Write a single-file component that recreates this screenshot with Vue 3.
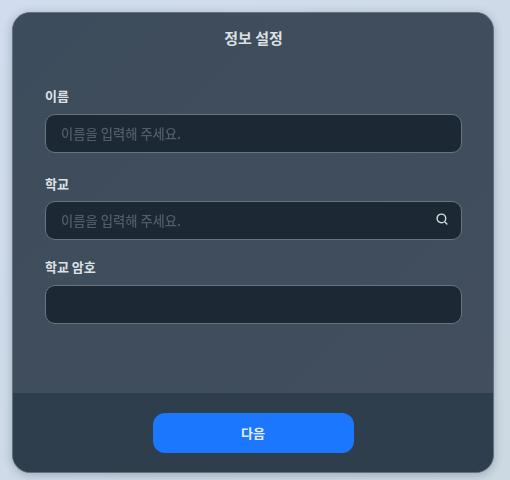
<script setup>
const fields = [
  { label: "이름", placeholder: "이름을 입력해 주세요." },
  { label: "학교", placeholder: "이름을 입력해 주세요.", search: true },
  { label: "학교 암호", placeholder: "" },
];
</script>

<template>
  <div class="page">
    <div class="card">
      <div class="body">
        <h1 class="title">정보 설정</h1>
        <div class="form">
          <div
            v-for="field in fields"
            :key="field.label"
            class="field"
            :class="{ 'has-search': field.search }"
          >
            <label class="label">{{ field.label }}</label>
            <div class="input-box">
              <input class="input" type="text" :placeholder="field.placeholder" />
              <svg
                v-if="field.search"
                class="search-icon"
                viewBox="0 0 12 12"
                fill="none"
                stroke="currentColor"
                stroke-width="1.4"
                stroke-linecap="round"
              >
                <circle cx="5.4" cy="5.4" r="4.3" />
                <path d="M9.2 9.2 10.9 10.9" />
              </svg>
            </div>
          </div>
        </div>
      </div>
      <div class="footer">
        <button class="next-btn" type="button">다음</button>
      </div>
    </div>
  </div>
</template>

<style>
html,
body {
  margin: 0;
  background: #d0dbe8;
}
</style>

<style scoped>
.page {
  box-sizing: border-box;
  width: 510px;
  height: 480px;
  padding: 12px 16px 7px 12px;
  background: linear-gradient(135deg, #d1dcee, #cdd9e2);
  font-family: "Noto Sans CJK KR", "Inter", sans-serif;
}

.card {
  display: flex;
  flex-direction: column;
  box-sizing: border-box;
  height: 461px;
  border: 1px solid #64717e;
  border-radius: 18px;
  overflow: hidden;
  background: #3f4e5e;
  box-shadow: 0 2px 10px rgba(40, 60, 80, 0.3);
  filter: blur(0.5px);
}

.body {
  flex: 1;
  padding: 0 31px 0 32px;
  background: linear-gradient(135deg, #3d4c5c, #424e5d);
}

.title {
  margin: 15px 0 0;
  font-size: 15px;
  line-height: 20px;
  font-weight: 700;
  text-align: center;
  color: #dce0e4;
}

.form {
  display: flex;
  flex-direction: column;
  gap: 18px;
  margin-top: 39px;
}

.field {
  display: flex;
  flex-direction: column;
  gap: 9px;
}

.has-search {
  gap: 8px;
  margin-top: 4px;
}

.label {
  font-size: 13px;
  line-height: 18px;
  font-weight: 700;
  color: #dde1e6;
}

.input-box {
  position: relative;
  height: 39px;
}

.input {
  box-sizing: border-box;
  width: 100%;
  height: 100%;
  padding: 0 40px 1px 15px;
  border: 1px solid #68747f;
  border-radius: 10px;
  outline: none;
  background: #1c2833;
  font-family: inherit;
  font-size: 13.3px;
  font-weight: 500;
  color: #e6e9ec;
}

.input::placeholder {
  color: #515c67;
  opacity: 1;
}

.search-icon {
  position: absolute;
  top: 12px;
  right: 14px;
  width: 12px;
  height: 12px;
  color: #d5dade;
}

.footer {
  display: flex;
  justify-content: center;
  align-items: center;
  height: 79px;
  background: #2e3e4d;
}

.next-btn {
  width: 201px;
  height: 40px;
  border: none;
  border-radius: 12px;
  background: #1c77ff;
  font-family: inherit;
  font-size: 13px;
  font-weight: 700;
  color: #e6ecf8;
}
</style>
